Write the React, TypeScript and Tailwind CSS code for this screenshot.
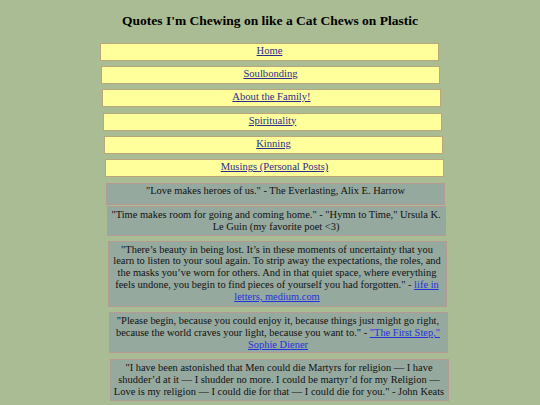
import React from "react";

const navItems = [
  { label: "Home", ml: "ml-[100px]" },
  { label: "Soulbonding", ml: "ml-[101px]" },
  { label: "About the Family!", ml: "ml-[102px]" },
  { label: "Spirituality", ml: "ml-[103px]" },
  { label: "Kinning", ml: "ml-[104px]" },
  { label: "Musings (Personal Posts)", ml: "ml-[105px]" },
];

const quoteBox =
  "w-[339px] border border-[#b39a93] bg-[#96a99f] py-[2px] text-center text-[10.45px] leading-[11.7px] text-[#111]";

export default function App() {
  return (
    <div className="min-h-[405px] w-full bg-[#a9bc94] font-['Liberation_Serif',serif] text-black">
      <h1 className="pt-[13px] text-center text-[13.5px] font-bold leading-[16px]">
        Quotes I'm Chewing on like a Cat Chews on Plastic
      </h1>
      <div className="mt-[13.7px] flex flex-col gap-[5.3px]">
        {navItems.map((n) => (
          <div
            key={n.label}
            className={`${n.ml} h-[18px] w-[339px] border border-[#bba57b] bg-[#ffff9c] pt-[1px] text-center text-[10.6px] leading-[12px]`}
          >
            <a href="#" className="text-[#2c2c8c] underline">
              {n.label}
            </a>
          </div>
        ))}
      </div>
      <div className="mt-[5.5px] flex flex-col">
        <div className={`${quoteBox} ml-[106px] px-0 pb-[8px] pt-[1px]`}>
          "Love makes heroes of us." - The Everlasting, Alix E. Harrow
        </div>
        <div className={`${quoteBox} ml-[106.5px] mt-[1px] px-0`}>
          "Time makes room for going and coming home." - "Hymn to Time," Ursula K. Le Guin (my favorite poet &lt;3)
        </div>
        <div className={`${quoteBox} ml-[107.5px] mt-[5px] px-[3px] pb-[4px]`}>
          "There’s beauty in being lost. It’s in these moments of uncertainty that you learn to listen to your soul again. To strip away the expectations, the roles, and the masks you’ve worn for others. And in that quiet space, where everything feels undone, you begin to find pieces of yourself you had forgotten." -{" "}
          <a href="#" className="text-[#2233dd] underline">
            life in letters, medium.com
          </a>
        </div>
        <div className={`${quoteBox} ml-[108.5px] mt-[5px] px-0`}>
          "Please begin, because you could enjoy it, because things just might go right, because the world craves your light, because you want to." -{" "}
          <a href="#" className="text-[#2233dd] underline">
            "The First Step," Sophie Diener
          </a>
        </div>
        <div className={`${quoteBox} ml-[109.5px] mt-[6px] px-0`}>
          "I have been astonished that Men could die Martyrs for religion — I have shudder’d at it — I shudder no more. I could be martyr’d for my Religion — Love is my religion — I could die for that — I could die for you." - John Keats
        </div>
        <div className={`${quoteBox} ml-[110px] mt-[5px] mb-[6px] px-0`}>
          "Not all those who wander are lost." - J.R.R. Tolkien
        </div>
      </div>
    </div>
  );
}
